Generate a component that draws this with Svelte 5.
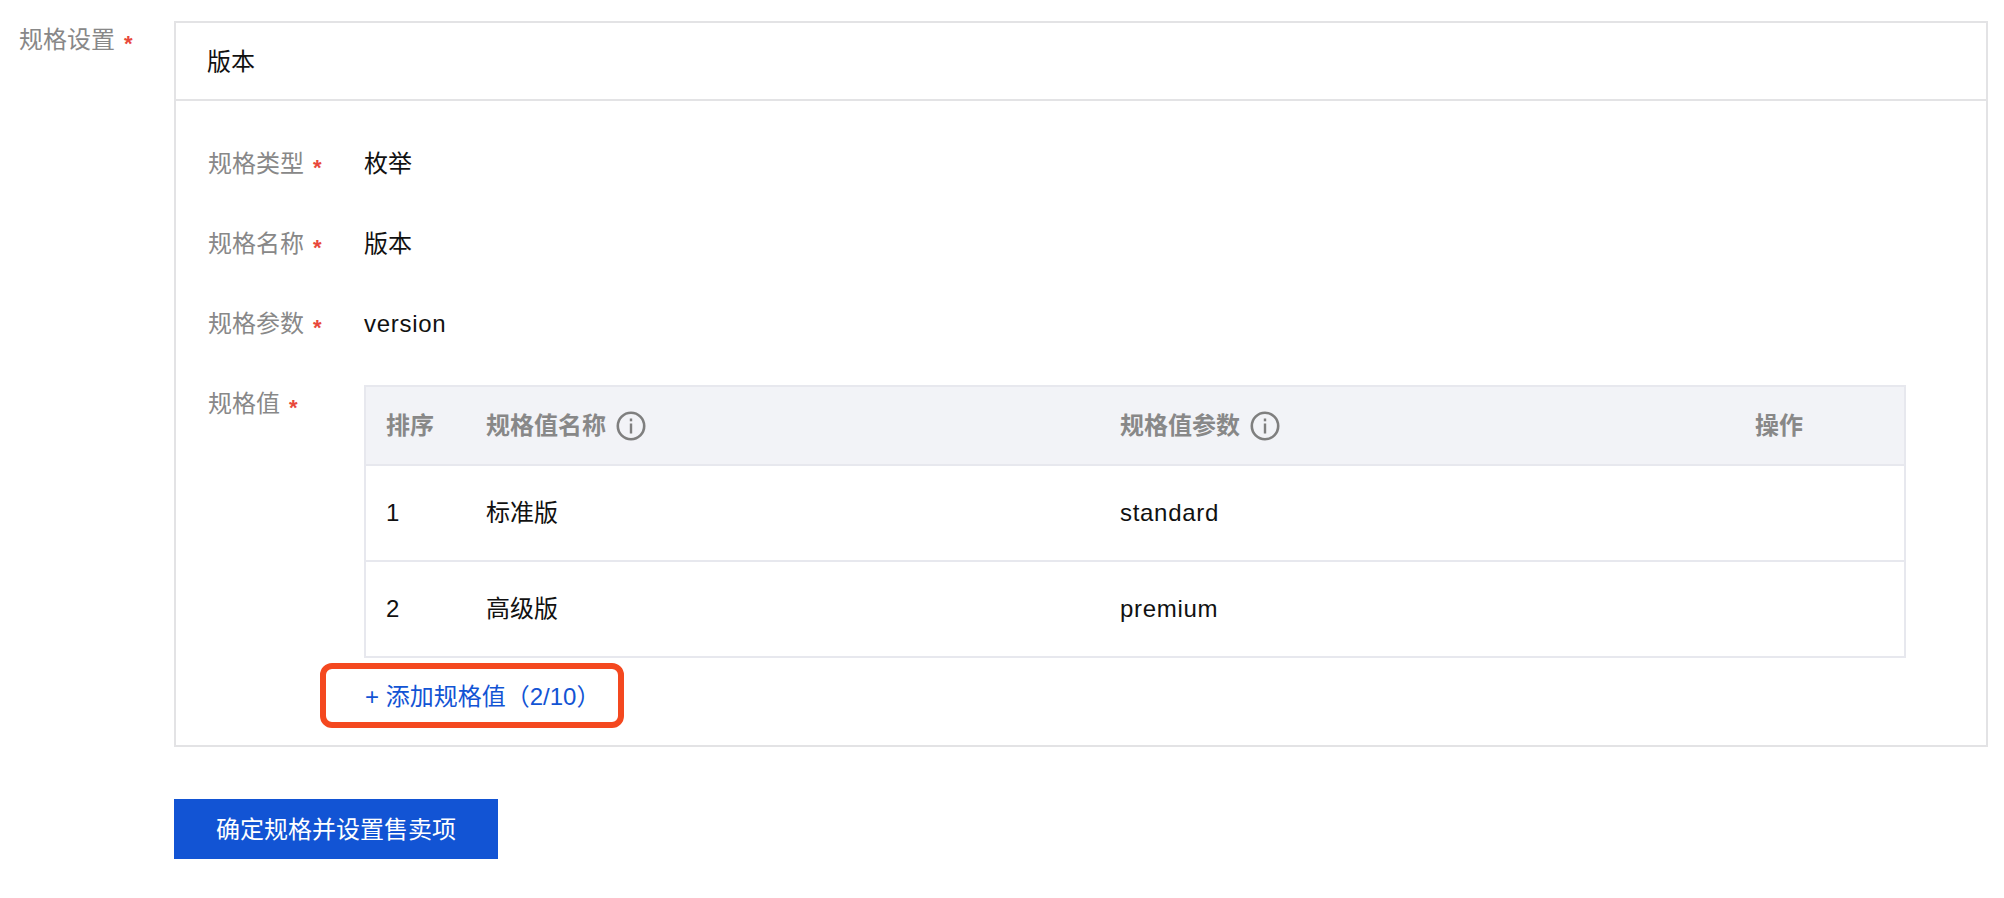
<script>
	const fields = [
		{ label: '规格类型', value: '枚举' },
		{ label: '规格名称', value: '版本' },
		{ label: '规格参数', value: 'version', latin: true }
	];

	const specValues = [
		{ order: 1, name: '标准版', param: 'standard' },
		{ order: 2, name: '高级版', param: 'premium' }
	];
</script>

{#snippet info()}
	<svg class="info" width="30" height="30" viewBox="0 0 30 30" aria-hidden="true">
		<circle cx="15" cy="15" r="13.2" fill="none" stroke="#7f7f7f" stroke-width="2.6" />
		<rect x="13.8" y="7.5" width="2.4" height="2.8" fill="#7f7f7f" />
		<rect x="13.8" y="12.5" width="2.4" height="10" fill="#7f7f7f" />
	</svg>
{/snippet}

<div class="page">
	<div class="form-row">
		<div class="outer-label">规格设置<span class="req">*</span></div>
		<div class="panel-wrap">
			<section class="panel">
				<header class="panel-head">版本</header>
				<div class="panel-body">
					{#each fields as field}
						<div class="field">
							<div class="field-label">{field.label}<span class="req">*</span></div>
							<div class="field-value" class:latin={field.latin}>{field.value}</div>
						</div>
					{/each}

					<div class="field values">
						<div class="field-label">规格值<span class="req">*</span></div>
						<div class="field-content">
							<div class="table">
								<div class="tr th">
									<div>排序</div>
									<div class="with-icon">规格值名称{@render info()}</div>
									<div class="with-icon">规格值参数{@render info()}</div>
									<div>操作</div>
								</div>
								{#each specValues as row}
									<div class="tr">
										<div>{row.order}</div>
										<div>{row.name}</div>
										<div class="latin">{row.param}</div>
										<div></div>
									</div>
								{/each}
							</div>
							<div class="add">+ 添加规格值（2/10）</div>
						</div>
					</div>
				</div>
			</section>
			<button class="confirm">确定规格并设置售卖项</button>
		</div>
	</div>
</div>

<style>
	:global(body) {
		background: #fff;
	}

	.page {
		padding: 21px 16px 0 19px;
		font-family: "Liberation Sans", "Noto Sans CJK SC", sans-serif;
		font-size: 24px;
		line-height: 38px;
		color: #111;
	}

	.form-row {
		display: flex;
	}

	.outer-label {
		width: 155px;
		flex: none;
		color: #888;
	}

	.req {
		display: inline-block;
		margin-left: 9px;
		color: #e8483c;
		font-size: 22px;
		font-weight: 700;
		line-height: 20px;
		vertical-align: -3px;
	}

	.panel-wrap {
		flex: 1;
		min-width: 0;
	}

	.panel {
		border: 2px solid #e3e3e5;
	}

	.panel-head {
		height: 76px;
		padding-left: 31px;
		line-height: 78px;
		border-bottom: 2px solid #e3e3e5;
	}

	.panel-body {
		padding: 44px 80px 17px 32px;
	}

	.field {
		display: flex;
		margin-bottom: 42px;
	}

	.field.values {
		margin-bottom: 0;
	}

	.field-label {
		width: 156px;
		flex: none;
		color: #888;
	}

	.field-content {
		flex: 1;
		min-width: 0;
	}

	.latin {
		letter-spacing: 0.7px;
	}

	.table {
		border: 2px solid #e7e8ee;
	}

	.tr {
		display: grid;
		grid-template-columns: 100px 634px 635px 1fr;
		align-items: center;
		height: 96px;
		padding-left: 20px;
		border-top: 2px solid #e7e8ee;
		box-sizing: border-box;
	}

	.tr.th {
		height: 77px;
		border-top: 0;
		background: #f2f3f7;
		color: #888;
		font-weight: 700;
	}

	.with-icon {
		display: flex;
		align-items: center;
		gap: 10px;
	}

	.info {
		display: block;
	}

	.add {
		box-sizing: border-box;
		width: 304px;
		height: 65px;
		margin: 5px 0 0 -44px;
		padding-left: 39px;
		line-height: 55px;
		border: 6px solid #f4481f;
		border-radius: 12px;
		color: #1254d4;
		white-space: nowrap;
	}

	.confirm {
		display: block;
		margin-top: 52px;
		width: 324px;
		height: 60px;
		padding: 2px 0 0;
		border: 0;
		background: #1254d4;
		color: #fff;
		font: inherit;
	}
</style>
